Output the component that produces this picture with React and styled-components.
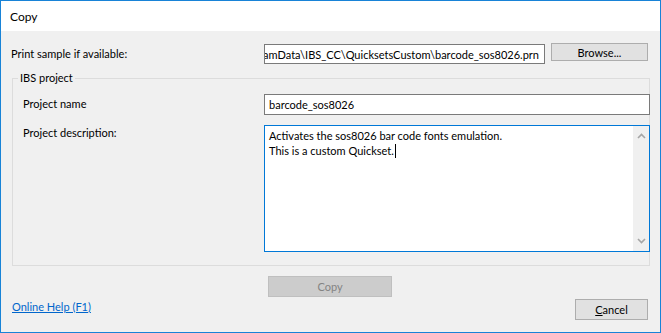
import React from "react";
import styled, { createGlobalStyle } from "styled-components";

const GlobalStyle = createGlobalStyle`
  body {
    margin: 0;
    font-family: Lato, "Noto Sans", sans-serif;
    font-size: 11px;
    color: #000;
  }
`;

const Window = styled.div`
  box-sizing: border-box;
  width: 661px;
  height: 333px;
  border: 1px solid #1883d7;
  background: #f0f0f0;
  display: flex;
  flex-direction: column;
`;

const TitleBar = styled.div`
  height: 30px;
  background: #fff;
  padding-left: 9px;
  display: flex;
  align-items: center;
  font-size: 12px;
`;

const Body = styled.div`
  flex: 1;
  padding: 12px 10px 0 10px;
  display: flex;
  flex-direction: column;
`;

const SampleRow = styled.div`
  display: grid;
  grid-template-columns: 247px 281px 97px;
  column-gap: 6px;
  align-items: start;
`;

const Label = styled.div`
  line-height: 14px;
  padding-top: ${(p) => p.$top || 0}px;
  white-space: nowrap;
`;

const TextBox = styled.div`
  box-sizing: border-box;
  height: ${(p) => p.$height || 21}px;
  margin-top: ${(p) => p.$offset || 0}px;
  border: 1px solid #7a7a7a;
  background: #fff;
  display: flex;
  align-items: center;
  justify-content: ${(p) => (p.$end ? "flex-end" : "flex-start")};
  overflow: hidden;
  white-space: nowrap;
  padding: 0 5px 0 4px;
`;

const Button = styled.button`
  box-sizing: border-box;
  height: ${(p) => p.$height || 21}px;
  width: ${(p) => p.$width}px;
  border: 1px solid #adadad;
  background: #e1e1e1;
  font-family: inherit;
  font-size: 11px;
  color: #000;
  padding: 0;
  &:disabled {
    background: #cccccc;
    border-color: #bfbfbf;
    color: #838383;
  }
`;

const Group = styled.fieldset`
  margin: 7px 0 0 1px;
  padding: 0;
  border: 1px solid #dcdcdc;
  min-width: 0;
`;

const Legend = styled.legend`
  margin-left: 5px;
  padding: 0 2px;
  line-height: 14px;
`;

const GroupInner = styled.div`
  padding: 9px 0 13px 10px;
  margin-right: -1px;
  display: grid;
  grid-template-columns: 241px 1fr;
  row-gap: 10px;
  align-items: start;
`;

const MemoBox = styled.div`
  box-sizing: border-box;
  height: 127px;
  border: 1px solid #0078d7;
  background: #fff;
  display: flex;
`;

const MemoText = styled.div`
  flex: 1;
  padding: 2px 4px;
  line-height: 15px;
`;

const Caret = styled.span`
  display: inline-block;
  width: 1px;
  height: 14px;
  background: #000;
  vertical-align: -3px;
  margin-left: 1px;
`;

const ScrollBar = styled.div`
  width: 16px;
  background: #f0f0f0;
  display: flex;
  flex-direction: column;
  justify-content: space-between;
  align-items: center;
  padding: 7px 0;
`;

const CopyRow = styled.div`
  margin-top: 10px;
  padding-left: 257px;
`;

const Footer = styled.div`
  margin-top: 2px;
  padding: 0 2px 0 1px;
  display: flex;
  justify-content: space-between;
  align-items: flex-start;
`;

const HelpLink = styled.a`
  color: #0066cc;
  text-decoration: underline;
  line-height: 14px;
  margin-top: 1px;
  cursor: pointer;
`;

const Chevron = ({ up }) => (
  <svg width="9" height="6" viewBox="0 0 9 6">
    <path
      d={up ? "M1 5 L4.5 1.5 L8 5" : "M1 1 L4.5 4.5 L8 1"}
      fill="none"
      stroke="#a6a6a6"
      strokeWidth="1.6"
    />
  </svg>
);

export default function App() {
  return (
    <>
      <GlobalStyle />
      <Window>
        <TitleBar>Copy</TitleBar>
        <Body>
          <SampleRow>
            <Label $top={4}>Print sample if available:</Label>
            <TextBox $height={20} $offset={1} $end>
              C:\ProgramData\IBS_CC\QuicksetsCustom\barcode_sos8026.prn
            </TextBox>
            <Button $height={18} $width={97}>
              Browse...
            </Button>
          </SampleRow>
          <Group>
            <Legend>IBS project</Legend>
            <GroupInner>
              <Label $top={3}>Project name</Label>
              <TextBox>barcode_sos8026</TextBox>
              <Label $top={1}>Project description:</Label>
              <MemoBox>
                <MemoText>
                  Activates the sos8026 bar code fonts emulation.
                  <br />
                  This is a custom Quickset.
                  <Caret />
                </MemoText>
                <ScrollBar>
                  <Chevron up />
                  <Chevron />
                </ScrollBar>
              </MemoBox>
            </GroupInner>
          </Group>
          <CopyRow>
            <Button $width={124} disabled>
              Copy
            </Button>
          </CopyRow>
          <Footer>
            <HelpLink>Online Help (F1)</HelpLink>
            <Button $width={73}>
              <u>C</u>ancel
            </Button>
          </Footer>
        </Body>
      </Window>
    </>
  );
}
